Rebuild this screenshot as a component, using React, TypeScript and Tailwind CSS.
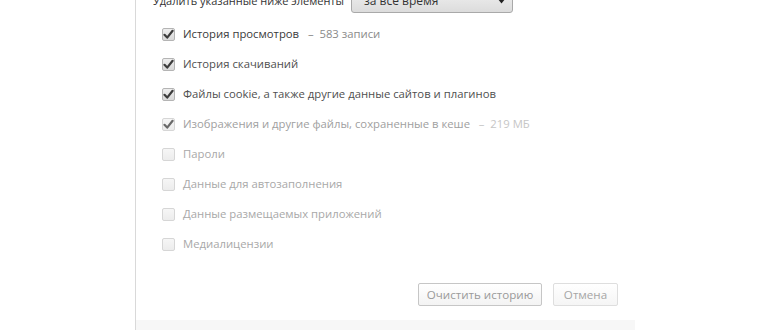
type Row = {
  label: string;
  extra?: string;
  checked: boolean;
  tone: "strong" | "normal" | "soft" | "faint";
};

const rows: Row[] = [
  { label: "История просмотров", extra: "583 записи", checked: true, tone: "strong" },
  { label: "История скачиваний", checked: true, tone: "normal" },
  { label: "Файлы cookie, а также другие данные сайтов и плагинов", checked: true, tone: "normal" },
  { label: "Изображения и другие файлы, сохраненные в кеше", extra: "219 МБ", checked: true, tone: "soft" },
  { label: "Пароли", checked: false, tone: "faint" },
  { label: "Данные для автозаполнения", checked: false, tone: "faint" },
  { label: "Данные размещаемых приложений", checked: false, tone: "faint" },
  { label: "Медиалицензии", checked: false, tone: "faint" },
];

const toneText = {
  strong: "text-[#3a3a3a] font-medium",
  normal: "text-[#4f4f4f]",
  soft: "text-[#a0a0a0]",
  faint: "text-[#a8a8a8]",
};

const Checkbox = ({ checked, tone }: { checked: boolean; tone: Row["tone"] }) => {
  const faint = tone === "soft" || tone === "faint";
  return (
    <span
      className={`flex items-center justify-center w-[13px] h-[13px] rounded-[2px] border ${
        faint
          ? "border-[#d6d6d6] bg-gradient-to-b from-[#f6f6f6] to-[#ececec]"
          : "border-[#b4b4b4] bg-gradient-to-b from-[#eeeeee] to-[#d8d8d8]"
      }`}
    >
      {checked && (
        <svg width="11" height="11" viewBox="0 0 11 11">
          <path
            d="M1.5 5.8 L4.2 8.6 L9.6 1.8"
            fill="none"
            stroke={tone === "soft" ? "#6a6a6a" : "#3c3c3c"}
            strokeWidth="2.2"
            strokeLinecap="round"
            strokeLinejoin="round"
          />
        </svg>
      )}
    </span>
  );
};

const App = () => {
  return (
    <div
      className="w-[770px] h-[330px] bg-white overflow-hidden flex"
      style={{ fontFamily: '"Open Sans", "Noto Sans", sans-serif' }}
    >
      <div className="w-[135px]" />

      {/* окно очистки истории */}
      <div className="w-[500px] border-l border-[#d9d9d9] flex flex-col">
        <div className="flex items-center pl-[17px] mt-[-11px] h-[24px]">
          <span className="w-[198px] whitespace-nowrap text-[11px] font-medium text-[#333]">
            Удалить указанные ниже элементы
          </span>
          <div className="w-[162px] h-[24px] rounded-[3px] border border-[#a9a9a9] bg-gradient-to-b from-[#f0f0f0] to-[#dcdcdc] flex items-center justify-between pl-[12px] pr-[6px]">
            <span className="text-[12px] font-medium text-[#333]">за все время</span>
            <svg width="9" height="6" viewBox="0 0 9 6">
              <path d="M0.5 0.5 L8.5 0.5 L4.5 5.5 Z" fill="#222" />
            </svg>
          </div>
        </div>

        <div className="flex flex-col pl-[26px] pt-[6px]">
          {rows.map((row) => (
            <div key={row.label} className="flex items-center h-[30px] gap-[8px]">
              <Checkbox checked={row.checked} tone={row.tone} />
              <span className={`text-[11.3px] whitespace-pre ${toneText[row.tone]}`}>
                {row.label}
                {row.extra && (
                  <span
                    className={`font-normal ${
                      row.tone === "soft" ? "text-[#c6c6c6]" : "text-[#8a8a8a]"
                    }`}
                  >
                    {"   –  "}
                    {row.extra}
                  </span>
                )}
              </span>
            </div>
          ))}
        </div>

        <div className="flex justify-end gap-[11px] pr-[17px] mt-[24px]">
          <button className="h-[23px] w-[124px] border border-[#c6c6c6] rounded-[2px] bg-gradient-to-b from-white to-[#f3f3f3] text-[11.6px] text-[#9a9a9a]">
            Очистить историю
          </button>
          <button className="h-[23px] w-[65px] border border-[#dedede] rounded-[2px] bg-gradient-to-b from-white to-[#f5f5f5] text-[11.6px] text-[#a6a6a6]">
            Отмена
          </button>
        </div>

        <div className="mt-auto h-[10px] bg-[#f7f7f7]" />
      </div>
    </div>
  );
};

export default App;
